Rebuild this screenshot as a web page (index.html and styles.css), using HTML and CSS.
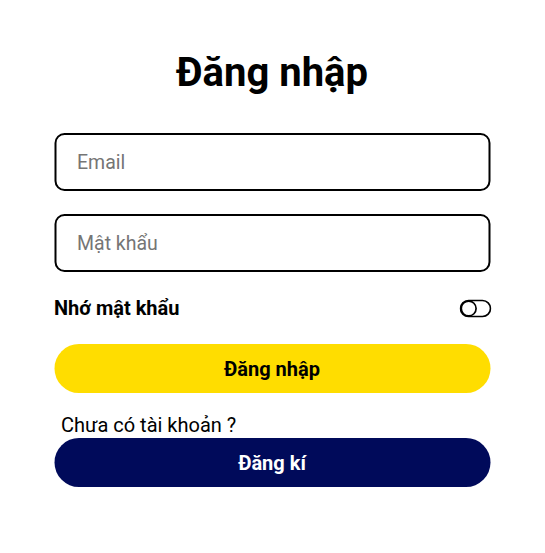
FILE: index.html
```html
<!DOCTYPE html>
<html lang="vi">
<head>
<meta charset="utf-8">
<title>Đăng nhập</title>
<link rel="stylesheet" href="styles.css">
</head>
<body>
<main class="login">
  <h1 class="title">Đăng nhập</h1>
  <form class="form">
    <input class="field" type="email" placeholder="Email">
    <input class="field" type="password" placeholder="Mật khẩu">
    <div class="remember">
      <span class="remember-label">Nhớ mật khẩu</span>
      <svg class="toggle" width="32" height="19" viewBox="0 0 32 19">
        <rect x="1" y="1.5" width="30" height="16" rx="8" fill="none" stroke="#000" stroke-width="1.7"/>
        <circle cx="9.2" cy="9.5" r="7.4" fill="none" stroke="#000" stroke-width="1.7"/>
      </svg>
    </div>
    <button class="btn btn-login" type="button">Đăng nhập</button>
    <p class="no-account">Chưa có tài khoản ?</p>
    <button class="btn btn-register" type="button">Đăng kí</button>
  </form>
</main>
</body>
</html>
```
FILE: styles.css
```css
* { box-sizing: border-box; }
body {
  margin: 0;
  background: #fff;
  font-family: Roboto, "Noto Sans", sans-serif;
  color: #000;
}
.login {
  width: 436px;
  margin: 0 auto;
  padding-top: 48px;
  transform: translateX(-0.5px);
}
.title {
  margin: 0;
  text-align: center;
  font-size: 40px;
  font-weight: 700;
  line-height: 50px;
}
.form {
  display: flex;
  flex-direction: column;
  margin-top: 35px;
}
.field {
  height: 58px;
  border: 2px solid #000;
  border-radius: 10px;
  padding: 0 21px;
  font-family: inherit;
  font-size: 19.5px;
  color: #000;
  outline: none;
  margin-bottom: 23px;
}
.field:last-of-type { margin-bottom: 0; }
.field::placeholder { color: #757575; }
.remember {
  display: flex;
  justify-content: space-between;
  align-items: center;
  margin-top: 4px;
  height: 68px;
  padding-bottom: 4px;
}
.remember-label {
  font-size: 20px;
  font-weight: 700;
}
.toggle { display: block; margin-right: -1px; }
.btn {
  height: 49px;
  border: none;
  border-radius: 25px;
  font-family: inherit;
  font-size: 20px;
  font-weight: 700;
  cursor: pointer;
}
.btn-login {
  background: #ffdd00;
  color: #000;
}
.no-account {
  margin: 0;
  padding: 20px 0 0 7px;
  font-size: 20px;
  line-height: 25px;
}
.btn-register {
  background: #000a5a;
  color: #fff;
}
```
